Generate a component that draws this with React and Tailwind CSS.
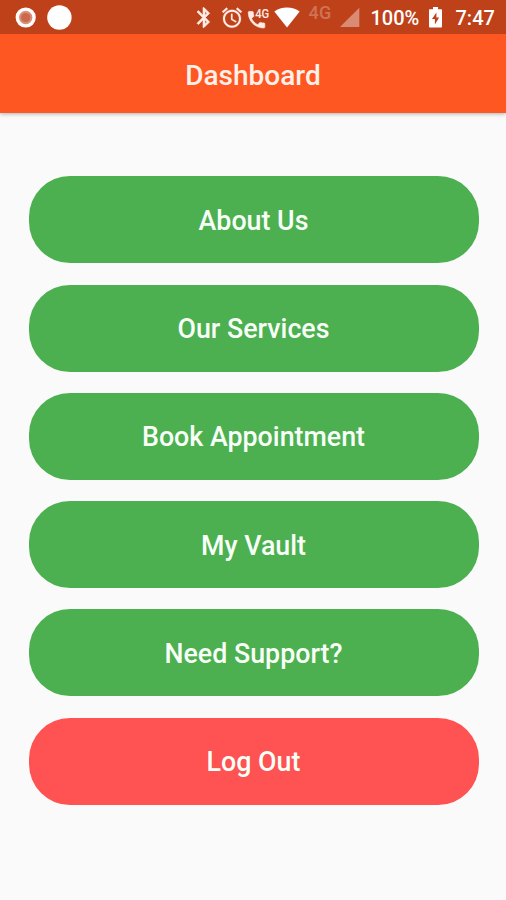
import React from 'react';

const ACTIONS = [
  { label: 'About Us', color: 'bg-[#4caf50]' },
  { label: 'Our Services', color: 'bg-[#4caf50]' },
  { label: 'Book Appointment', color: 'bg-[#4caf50]' },
  { label: 'My Vault', color: 'bg-[#4caf50]' },
  { label: 'Need Support?', color: 'bg-[#4caf50]' },
  { label: 'Log Out', color: 'bg-[#ff5252]' },
];

function StatusBar() {
  return (
    <div className="relative z-10 flex h-[34px] w-full shrink-0 items-center bg-[#bf4119] pl-[15px] text-white">
      <svg className="h-[21px] w-[21px] shrink-0" viewBox="0 0 21 21">
        <circle cx="10.7" cy="10.5" r="8.4" fill="#d9907a" stroke="white" strokeWidth="3.4" />
        <circle cx="10.7" cy="10.5" r="4.6" fill="#cb694a" />
      </svg>
      <svg className="ml-[11px] h-[25px] w-[25px] shrink-0" viewBox="0 0 25 25" fill="white">
        <circle cx="12.4" cy="12.5" r="12.2" />
      </svg>
      {/* Bluetooth */}
      <svg className="ml-[120px] h-6 w-6 shrink-0" viewBox="0 0 24 24" fill="#ffece5" stroke="#ffece5" strokeWidth=".6">
        <path transform="translate(0 .6)" d="M17.71 7.71L12 2h-1v7.59L6.41 5 5 6.41 10.59 12 5 17.59 6.41 19 11 14.41V22h1l5.71-5.71-4.3-4.29 4.3-4.29zM13 5.83l1.88 1.88L13 9.59V5.83zm1.88 10.46L13 18.17v-3.76l1.88 1.88z" />
      </svg>
      {/* Alarm */}
      <svg className="ml-[4px] h-6 w-6 shrink-0" viewBox="0 0 24 24" fill="#ffece5" stroke="#ffece5" strokeWidth=".2">
        <path transform="translate(0 .7)" d="M22 5.72l-4.6-3.86-1.29 1.53 4.6 3.86L22 5.72zM7.88 3.39L6.6 1.86 2 5.71l1.29 1.53 4.59-3.85zM12.5 8H11v6l4.75 2.85.75-1.23-4-2.37V8zM12 4c-4.97 0-9 4.03-9 9s4.02 9 9 9c4.97 0 9-4.03 9-9s-4.03-9-9-9zm0 16c-3.87 0-7-3.13-7-7s3.13-7 7-7 7 3.13 7 7-3.13 7-7 7z" />
      </svg>
      {/* Call over 4G */}
      <svg className="ml-[3px] h-6 w-6 shrink-0" viewBox="0 0 24 24" fill="#ffece5">
        <path stroke="#ffece5" strokeWidth=".7" transform="translate(-1.5 3.7) scale(.92)" d="M20 15.5c-1.25 0-2.45-.2-3.57-.57-.35-.11-.74-.03-1.02.24l-2.2 2.2c-2.83-1.44-5.15-3.75-6.59-6.59l2.2-2.21c.28-.26.36-.65.25-1C8.7 6.45 8.5 5.25 8.5 4c0-.55-.45-1-1-1H4c-.55 0-1 .45-1 1 0 9.39 7.61 17 17 17 .55 0 1-.45 1-1v-3.5c0-.55-.45-1-1-1z" />
        <text x="8.2" y="12.6" fontFamily="Roboto, sans-serif" fontSize="13.5" fontWeight="500" textLength="14" lengthAdjust="spacingAndGlyphs">4G</text>
      </svg>
      {/* Wi-Fi */}
      <svg className="ml-[2.5px] h-[21px] w-[26px] shrink-0" viewBox="0 0 26 21" fill="white">
        <path d="M13 20.5 .3 4.4C3.8 1.8 8.2.4 13 .4s9.2 1.4 12.7 4z" />
      </svg>
      <span className="mt-[-8px] ml-[9px] w-[24px] shrink-0 text-[18px] leading-5 font-medium tracking-[0.3px] text-[#d07355]">4G</span>
      {/* Mobile signal */}
      <svg className="ml-[7px] h-5 w-5 shrink-0" viewBox="0 0 20 20" fill="#d98b73">
        <path d="M19.3 .7v19.3H0z" />
      </svg>
      <span className="ml-[11px] w-[49px] shrink-0 pt-[2px] text-[20px] leading-6 font-medium whitespace-nowrap">100%</span>
      {/* Charging battery */}
      <svg className="ml-[9px] h-[21px] w-[13px] shrink-0" viewBox="0 0 13 21">
        <path fill="white" d="M4 0h5v2.2h3c.6 0 1 .4 1 1V19.5c0 .6-.4 1-1 1H1c-.6 0-1-.4-1-1V3.2c0-.6.4-1 1-1h3z" />
        <path fill="#bf4119" d="M7.4 5.5 3 12.1h2.9v5.4l4.2-7H7.4z" />
      </svg>
      <span className="ml-[14px] pt-[2px] text-[20px] leading-6 font-medium whitespace-nowrap">7:47</span>
    </div>
  );
}

export default function App() {
  return (
    <div className="flex h-[900px] w-[506px] flex-col overflow-hidden bg-[#fafafa] font-['Roboto',sans-serif]">
      <StatusBar />
      <header className="flex h-[79px] shrink-0 items-center justify-center bg-[#ff5722] pt-[4px] shadow-[0_1px_4px_rgba(0,0,0,0.3)]">
        <h1 className="text-[28px] leading-8 font-medium text-[#fff0ea]">Dashboard</h1>
      </header>
      <main className="flex flex-col gap-[21.25px] pt-[63.45px] pr-[27.5px] pl-[28.5px]">
        {ACTIONS.map(({ label, color }) => (
          <button
            key={label}
            type="button"
            className={`flex h-[87px] w-full items-center justify-center rounded-[41px] pt-[2px] text-[26.8px] leading-8 font-medium text-[#f7fff7] ${color}`}
          >
            {label}
          </button>
        ))}
      </main>
    </div>
  );
}
